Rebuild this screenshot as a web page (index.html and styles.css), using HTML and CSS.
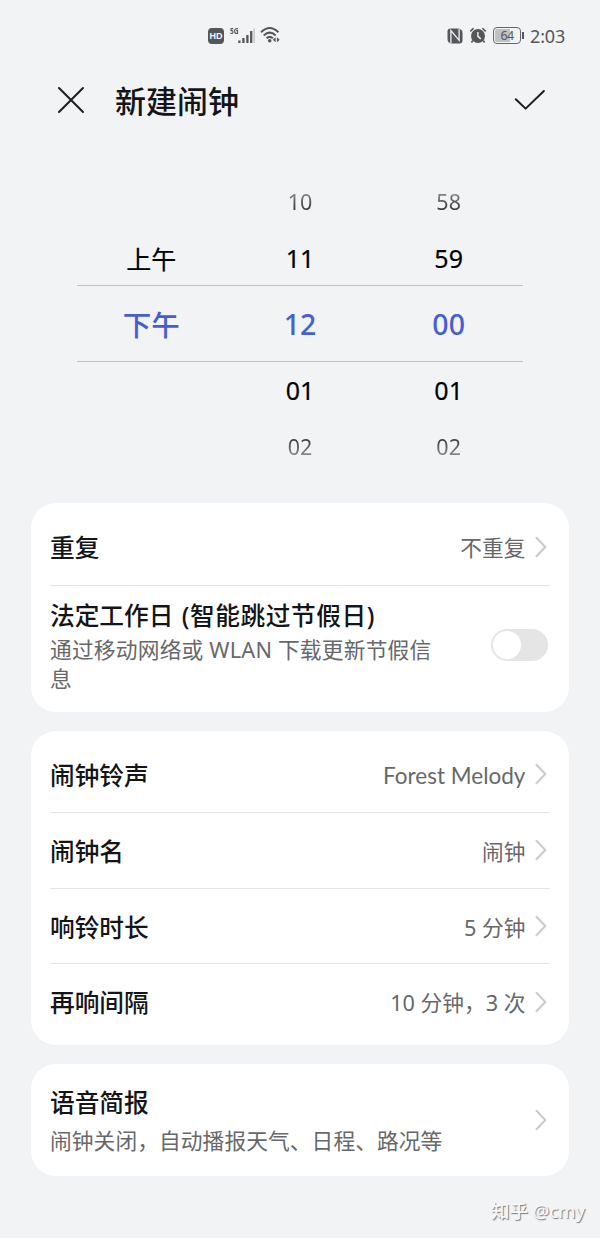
FILE: index.html
```html
<!DOCTYPE html>
<html lang="zh-CN">
<head>
<meta charset="utf-8">
<title>新建闹钟</title>
<link rel="stylesheet" href="styles.css">
</head>
<body>
<div class="screen">
  <div class="status">
    <div class="status-left">
      <span class="hd">HD</span>
      <span class="net">5G</span>
      <svg class="signal" width="17" height="16" viewBox="0 0 17 16"><path d="M1.4 15v-2.5M5.4 15v-5M9.4 15V7M13.2 15V3" stroke="#55565a" stroke-width="2.3"/><path d="M16.2 15V.5" stroke="#c3c4c7" stroke-width="1.4"/></svg>
      <svg class="wifi" width="21" height="18" viewBox="0 0 21 18"><g fill="none" stroke="#55565a" stroke-width="2"><path d="M1 6.2Q9.7-2.2 18.4 6.2"/><path d="M3.7 9.4Q9.7 3.8 15.7 9.4"/><path d="M6.5 12.3Q9.7 9.4 12.9 12.3"/></g><circle cx="9.7" cy="14.7" r="1.8" fill="#55565a"/><path d="M15.6 11.2v5l-2.8-2.5zM16.9 11.2v5l2.8-2.5z" fill="#55565a"/></svg>
    </div>
    <div class="status-right">
      <svg class="nfc" width="16" height="16" viewBox="0 0 16 16"><path d="M3.5.5h6.800Q15.500.5 15.500 5v7.500q0 3-3 3H5.700Q.5 15.500.5 11V3.500q0-3 3-3z" fill="#55565a"/><path d="M3.900 15V2.600l8.200 9.700V1" fill="none" stroke="#f1f3f5" stroke-width="1.300"/></svg>
      <svg class="alarm" width="18" height="17" viewBox="0 0 17 17"><circle cx="8.5" cy="9" r="7" fill="#55565a"/><path d="M.8 4.400 4.100 1.200M16.200 4.400l-3.300-3.200M3.400 13.500l-1.500 2M13.600 13.500l1.500 2" stroke="#55565a" stroke-width="1.600"/><path d="M8.400 4.900v4.500l2.900 2.500" fill="none" stroke="#f1f3f5" stroke-width="1.400"/></svg>
      <span class="battery"><span class="level">64</span></span><i class="cap"></i>
      <span class="clock">2:03</span>
    </div>
  </div>

  <div class="header">
    <svg width="28" height="28" viewBox="0 0 28 28"><path d="M2 2l24 24M26 2 2 26" stroke="#1d1e20" stroke-width="2" stroke-linecap="round"/></svg>
    <h1 class="title">新建闹钟</h1>
    <svg class="confirm" width="32" height="22" viewBox="0 0 32 22"><path d="M1.8 10.2 11.6 19.6 29.9 2" fill="none" stroke="#1d1e20" stroke-width="2" stroke-linecap="round" stroke-linejoin="round"/></svg>
  </div>

  <div class="picker">
    <div class="line far top"><span></span><span>10</span><span>58</span></div>
    <div class="line near"><span>上午</span><span>11</span><span>59</span></div>
    <div class="line current"><span>下午</span><span>12</span><span>00</span></div>
    <div class="line near after"><span></span><span>01</span><span>01</span></div>
    <div class="line far bottom"><span></span><span>02</span><span>02</span></div>
  </div>

  <div class="card">
    <div class="row"><span class="label">重复</span><span class="value">不重复</span><svg class="chev" viewBox="0 0 12 22"><path d="M1.5 1.8 10.3 11 1.5 20.2"/></svg></div>
    <div class="row workday">
      <div class="copy"><div class="label">法定工作日 <span class="note">(智能跳过节假日)</span></div><div class="desc">通过移动网络或 WLAN 下载更新节假信息</div></div>
      <span class="switch"><i></i></span>
    </div>
  </div>

  <div class="card">
    <div class="row"><span class="label">闹钟铃声</span><span class="value latin">Forest Melody</span><svg class="chev" viewBox="0 0 12 22"><path d="M1.5 1.8 10.3 11 1.5 20.2"/></svg></div>
    <div class="row"><span class="label">闹钟名</span><span class="value">闹钟</span><svg class="chev" viewBox="0 0 12 22"><path d="M1.5 1.8 10.3 11 1.5 20.2"/></svg></div>
    <div class="row"><span class="label">响铃时长</span><span class="value">5 分钟</span><svg class="chev" viewBox="0 0 12 22"><path d="M1.5 1.8 10.3 11 1.5 20.2"/></svg></div>
    <div class="row"><span class="label">再响间隔</span><span class="value">10 分钟，3 次</span><svg class="chev" viewBox="0 0 12 22"><path d="M1.5 1.8 10.3 11 1.5 20.2"/></svg></div>
  </div>

  <div class="card">
    <div class="row brief">
      <div class="copy"><div class="label">语音简报</div><div class="desc">闹钟关闭，自动播报天气、日程、路况等</div></div>
      <svg class="chev" viewBox="0 0 12 22"><path d="M1.5 1.8 10.3 11 1.5 20.2"/></svg>
    </div>
  </div>

  <div class="credit"><b>知乎</b> @cmy</div>
</div>
</body>
</html>
```
FILE: styles.css
```css
* { box-sizing: border-box; }
body {
  margin: 0;
  background: #f1f3f5;
  color: #141518;
  font-family: "Noto Sans", "Noto Sans CJK SC", sans-serif;
}
.screen { width: 600px; height: 1238px; overflow: hidden; display: flex; flex-direction: column; }

.status {
  height: 71px;
  flex: none;
  display: flex;
  align-items: center;
  justify-content: space-between;
  padding: 0 35px 0 208px;
  color: #55565a;
}
.status-left, .status-right { display: flex; align-items: center; }
.hd {
  width: 16px; height: 16px;
  border-radius: 4px;
  background: #55565a;
  color: #f1f3f5;
  font: bold 9px/16px "Liberation Sans", sans-serif;
  text-align: center;
}
.net { font: bold 9px/10px "Noto Sans", sans-serif; margin: -9px 0 0 6px; width: 12px; transform: scaleX(.75); transform-origin: left; }
.signal { margin-left: -4px; }
.wifi { margin: 0 0 1px 5px; }
.alarm { margin: 0 6px 0 6px; }
.battery {
  width: 28px; height: 17px;
  border: 1.5px solid #66676a;
  border-radius: 4px;
  padding: 1px;
}
.level {
  display: block;
  height: 13px;
  border-radius: 2px;
  background: linear-gradient(to right, #bfc0c3 64%, transparent 64%);
  font-size: 12.5px;
  line-height: 13px;
  text-align: center;
  letter-spacing: -0.5px;
}
.cap { width: 2px; height: 7px; background: #55565a; margin-left: 1px; }
.clock { font-size: 18px; line-height: 24px; margin-left: 6px; letter-spacing: -0.2px; }

.header { height: 58px; flex: none; display: flex; align-items: center; padding: 0 54px 0 57px; }
.title { font-size: 31px; line-height: 44px; font-weight: 500; margin: 2px 0 0 30px; }
.confirm { margin-left: auto; }

.picker { margin: 45px 77px 0; height: 302px; flex: none; }
.line { display: grid; grid-template-columns: repeat(3, 1fr); align-items: center; text-align: center; height: 57px; }
.near { height: 54px; font-size: 25px; color: #000; -webkit-text-stroke: 0.2px #000; }
.after { height: 57px; padding-bottom: 2px; }
.far { font-size: 21.5px; padding-bottom: 2px; }
.far span { background: linear-gradient(#8a8a8a, #333) center / 100% 18px; -webkit-background-clip: text; background-clip: text; color: transparent; }
.far.bottom span { background-image: linear-gradient(#333, #8a8a8a); }
.current { height: 77px; border: solid #bfc1c4; border-width: 1px 0; font-size: 28.5px; font-weight: 500; color: #465fd0; }

.card {
  margin: 0 31.4px 19px 31.4px;
  padding: 6px 18.6px;
  border-radius: 25px;
  background: #fff;
  flex: none;
}
.picker + .card { margin-top: 27px; }
.row { height: 75.6px; display: flex; align-items: center; }
.row + .row { border-top: 1px solid #e3e4e5; }
.label { font-size: 24.7px; line-height: 36px; font-weight: 500; }
.value { margin-left: auto; font-size: 21.7px; line-height: 32px; color: #67686a; }
.row > .label, .row > .value { padding-top: 3px; }
.note { letter-spacing: 0.55px; margin-left: 2px; }
.desc { font-size: 21.75px; line-height: 28.5px; color: #67686a; }
.row > .latin { font-family: Lato, "Noto Sans", sans-serif; font-size: 22.5px; }
.chev { width: 12px; height: 22px; margin: 0 2.6px 0 10px; flex: none; fill: none; stroke: #c9cacb; stroke-width: 2; stroke-linecap: round; stroke-linejoin: round; }
.workday { height: 121px; justify-content: space-between; }
.workday .copy { width: 392px; }
.workday .desc { padding-top: 2px; letter-spacing: 0.18px; }
.switch { width: 57px; height: 32px; border-radius: 16px; background: #e5e5e6; padding: 2px; margin: 0 2px 1px 0; }
.switch i { display: block; width: 28px; height: 28px; border-radius: 50%; background: #fff; }
.brief { height: 100px; justify-content: space-between; }
.brief .desc { margin-top: 6px; letter-spacing: 0.05px; }

.credit {
  margin: 2px 15px 0 auto;
  font-size: 18.5px;
  line-height: 28px;
  color: #f8f8f9;
  text-shadow: 1px 1px 1px #77797d;
}
.credit b { font-weight: 500; }
```
